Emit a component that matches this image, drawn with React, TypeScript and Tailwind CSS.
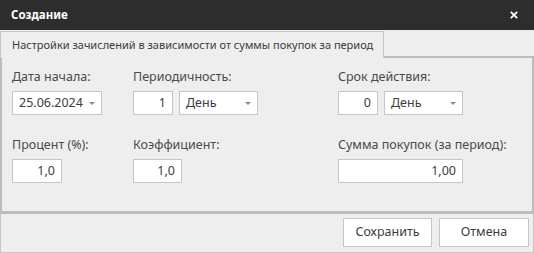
import React from "react";

const font = { fontFamily: '"Noto Sans", "Open Sans", sans-serif' };

function Arrow() {
  return (
    <svg width="6" height="3" viewBox="0 0 6 3" className="shrink-0">
      <polygon points="0,0 6,0 3,3" fill="#8a8a8a" />
    </svg>
  );
}

function NumBox({ value, w }: { value: string; w: string }) {
  return (
    <div className={`${w} h-[24px] bg-white border border-[#c6c6c6] flex items-center justify-end pr-[6px] text-[12.5px] text-[#3c3c3c]`}>
      {value}
    </div>
  );
}

function SelectBox({ value, w }: { value: string; w: string }) {
  return (
    <div className={`${w} h-[24px] bg-white border border-[#c6c6c6] flex items-center justify-between pl-[6px] pr-[6px] text-[12.5px] text-[#3c3c3c]`}>
      <span>{value}</span>
      <Arrow />
    </div>
  );
}

function Label({ children }: { children: React.ReactNode }) {
  return <div className="h-[18px] leading-[18px] text-[12.5px] text-[#4a4a4a] whitespace-nowrap">{children}</div>;
}

export default function App() {
  return (
    <div className="w-[534px] h-[253px] bg-[#eeeeee] flex flex-col overflow-hidden" style={font}>
      <div className="h-[30px] bg-[#2d2d2d] flex items-center justify-between pl-[11px] pr-[16px] shrink-0">
        <span className="text-white text-[11.5px] font-bold">Создание</span>
        <svg width="8" height="8" viewBox="0 0 8 8">
          <path d="M0.8 0.8 L7.2 7.2 M7.2 0.8 L0.8 7.2" stroke="#ffffff" strokeWidth="1.8" />
        </svg>
      </div>
      <div className="h-[27px] mt-[1px] flex shrink-0">
        <div className="w-[384px] border-l border-t border-r border-[#c6c6c6] flex items-center pl-[11px] text-[11px] text-[#3c3c3c] whitespace-nowrap">
          Настройки зачислений в зависимости от суммы покупок за период
        </div>
        <div className="flex-1 flex flex-col justify-end">
          <div className="h-[2px] bg-[#bcbcbc]" />
        </div>
      </div>
      <div className="h-[156px] border-l-2 border-r-2 border-b-[3px] border-[#bcbcbc] shrink-0 pl-[10px] pt-[10px] flex flex-col gap-[21px]">
        <div className="flex">
          <div className="w-[121px] flex flex-col gap-[5px]">
            <Label>Дата начала:</Label>
            <SelectBox value="25.06.2024" w="w-[90px]" />
          </div>
          <div className="w-[205px] flex flex-col gap-[5px]">
            <Label>Периодичность:</Label>
            <div className="flex gap-[6px]">
              <NumBox value="1" w="w-[40px]" />
              <SelectBox value="День" w="w-[79px]" />
            </div>
          </div>
          <div className="flex flex-col gap-[5px]">
            <Label>Срок действия:</Label>
            <div className="flex gap-[6px]">
              <NumBox value="0" w="w-[40px]" />
              <SelectBox value="День" w="w-[79px]" />
            </div>
          </div>
        </div>
        <div className="flex">
          <div className="w-[121px] flex flex-col gap-[5px]">
            <Label>Процент (%):</Label>
            <NumBox value="1,0" w="w-[50px]" />
          </div>
          <div className="w-[205px] flex flex-col gap-[5px]">
            <Label>Коэффициент:</Label>
            <NumBox value="1,0" w="w-[49px]" />
          </div>
          <div className="flex flex-col gap-[5px]">
            <Label>Сумма покупок (за период):</Label>
            <NumBox value="1,00" w="w-[125px]" />
          </div>
        </div>
      </div>
      <div className="flex-1 border-l border-r border-b border-[#c6c6c6] flex justify-end items-start pt-[4px] pr-[4px] gap-[7px]">
        <button className="w-[89px] h-[29px] bg-white border border-[#c6c6c6] text-[12.5px] text-[#3c3c3c]">Сохранить</button>
        <button className="w-[90px] h-[29px] bg-white border border-[#c6c6c6] text-[12.5px] text-[#3c3c3c]">Отмена</button>
      </div>
    </div>
  );
}
